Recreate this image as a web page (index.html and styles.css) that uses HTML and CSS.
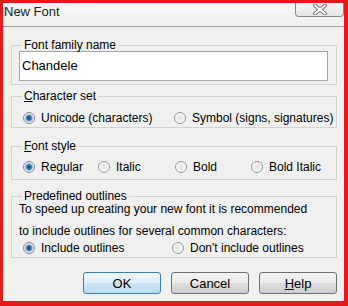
FILE: index.html
```html
<!DOCTYPE html>
<html>
<head>
<meta charset="utf-8">
<link rel="stylesheet" href="styles.css">
</head>
<body>
<div class="window">
  <div class="titlebar">
    <span class="title">New Font</span>
    <div class="close">
      <svg width="16" height="11" viewBox="0 0 16 11">
        <path d="M3 1.5 L13 9.5 M13 1.5 L3 9.5" stroke="#6e7e72" stroke-width="4" stroke-linecap="round" fill="none"/>
        <path d="M3 1.5 L13 9.5 M13 1.5 L3 9.5" stroke="#ffffff" stroke-width="2" stroke-linecap="round" fill="none"/>
      </svg>
    </div>
  </div>
  <div class="content">
    <fieldset class="group g1">
      <legend>Font family name</legend>
      <div class="textbox">Chandele</div>
    </fieldset>
    <fieldset class="group g2">
      <legend><u>C</u>haracter set</legend>
      <div class="row row-cs">
        <label class="opt"><span class="radio on"></span>Unicode (characters)</label>
        <label class="opt"><span class="radio"></span>Symbol (signs, signatures)</label>
      </div>
    </fieldset>
    <fieldset class="group g3">
      <legend><u>F</u>ont style</legend>
      <div class="row row-fs">
        <label class="opt"><span class="radio on"></span>Regular</label>
        <label class="opt"><span class="radio"></span>Italic</label>
        <label class="opt"><span class="radio"></span>Bold</label>
        <label class="opt"><span class="radio"></span>Bold Italic</label>
      </div>
    </fieldset>
    <fieldset class="group g4">
      <legend>Predefined outlines</legend>
      <div class="desc1">To speed up creating your new font it is recommended</div>
      <div class="desc2">to include outlines for several common characters:</div>
      <div class="row row-po">
        <label class="opt"><span class="radio on"></span>Include outlines</label>
        <label class="opt"><span class="radio"></span>Don't include outlines</label>
      </div>
    </fieldset>
    <div class="buttons">
      <button class="btn default">OK</button>
      <button class="btn">Cancel</button>
      <button class="btn"><u>H</u>elp</button>
    </div>
  </div>
</div>
</body>
</html>
```

FILE: styles.css
```css
* { box-sizing: border-box; }
html, body { margin: 0; padding: 0; }
body {
  width: 348px;
  height: 306px;
  overflow: hidden;
  font-family: "Liberation Sans", Arial, sans-serif;
  font-size: 12px;
  color: #000;
}
.window {
  width: 348px;
  height: 306px;
  border-style: solid;
  border-color: #e3191c;
  border-width: 3px 4px 5px 3px;
  background: #f0f0f0;
  display: flex;
  flex-direction: column;
}
.titlebar {
  height: 24px;
  flex: none;
  border-bottom: 1px solid #a0a0a0;
  display: flex;
  align-items: flex-start;
  background: linear-gradient(#f7f7f7, #efefef);
}
.title {
  font-size: 13px;
  line-height: 16px;
  padding: 1px 0 0 1px;
  color: #222;
}
.close {
  margin-left: auto;
  width: 49px;
  height: 14px;
  border: 1px solid #8a8a8a;
  border-top: none;
  border-radius: 0 0 4px 4px;
  display: flex;
  justify-content: center;
  align-items: center;
  background: linear-gradient(#f6f6f6, #e6e6e6);
}
.close svg { display: block; }
.content {
  padding: 0 7px 0 8px;
  display: flex;
  flex-direction: column;
}
.group {
  margin: 0;
  min-width: 0;
  border: 1px solid #d3d3d3;
  padding: 0 8px 0 7px;
}
legend {
  padding: 0 2px;
  margin-left: 3px;
  font-size: 12px;
  line-height: 12px;
}
.g1 { margin-top: 12px; padding-bottom: 3px; }
.g2 { margin-top: 5px; padding-bottom: 2px; }
.g3 { margin-top: 12px; padding-bottom: 5px; }
.g4 { margin-top: 10px; padding-bottom: 2px; }
.textbox {
  height: 30px;
  border: 1px solid #a5a5a5;
  background: #fff;
  font-size: 13px;
  line-height: 28px;
  padding-left: 2px;
}
.row {
  display: grid;
  padding-left: 4px;
  line-height: 14px;
  height: 14px;
}
.g2 .row { margin-top: 9px; }
.g3 .row { margin-top: 8px; }
.g4 .row { margin-top: 3px; }
.row-cs { grid-template-columns: 151px auto; }
.row-fs { grid-template-columns: 75px 77px 76px auto; }
.row-po { grid-template-columns: 149px auto; }
.opt {
  display: flex;
  align-items: center;
  gap: 6px;
  white-space: nowrap;
}
.radio {
  flex: none;
  width: 12px;
  height: 12px;
  border-radius: 50%;
  border: 1px solid #979b9d;
  background: radial-gradient(circle, #e2e2e2 0, #eeeeee 3px, #fafafa 5px);
}
.radio.on {
  border-color: #7f8a92;
  background: radial-gradient(circle, #14457a 0, #2e6aa6 2px, #6f9fd0 3px, #d6e4f1 4px, #f2f2f2 5px);
}
.desc1 {
  line-height: 14px;
  white-space: nowrap;
}
.desc2 {
  margin-top: 8px;
  line-height: 14px;
  white-space: nowrap;
}
.buttons {
  margin-top: 14px;
  display: flex;
  justify-content: flex-end;
  gap: 10px;
}
.btn {
  width: 78px;
  height: 22px;
  margin: 0;
  padding: 0;
  border: 1px solid #707070;
  border-radius: 3px;
  background: linear-gradient(#f3f3f3 0, #ebebeb 48%, #dddddd 52%, #cfcfcf 100%);
  font-family: "Liberation Sans", Arial, sans-serif;
  font-size: 13px;
  color: #000;
}
.btn.default {
  border-color: #3c7fb1;
  background: linear-gradient(#eef6fb 0, #dfeef8 48%, #cde5f4 52%, #bcdcf0 100%);
}
```
